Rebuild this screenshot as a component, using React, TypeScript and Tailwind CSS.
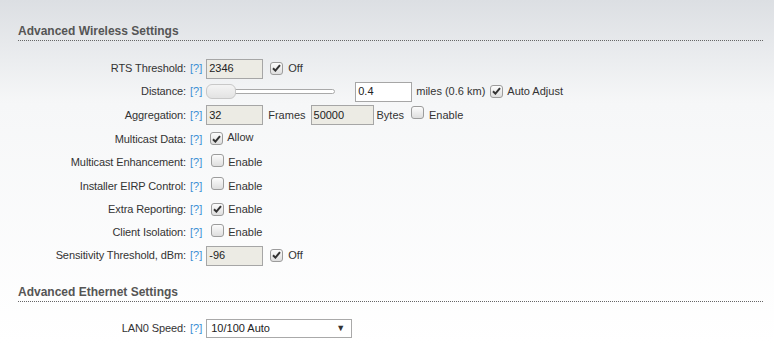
import React from "react";

const font = { fontFamily: '"Liberation Sans", Arial, sans-serif' };

function Check({ on }: { on?: boolean }) {
  return (
    <span className="inline-flex h-[13px] w-[13px] shrink-0 items-center justify-center rounded-[3px] border border-[#9c9c9c] bg-gradient-to-b from-[#fcfcfc] to-[#dedede]">
      {on && (
        <svg width="9" height="8" viewBox="0 0 9 8">
          <path d="M1 4.2 L3.4 6.6 L8 1.2" fill="none" stroke="#333" strokeWidth="2" />
        </svg>
      )}
    </span>
  );
}

function Input({ value, w = "w-[57px]", white }: { value: string; w?: string; white?: boolean }) {
  return (
    <span
      className={`inline-flex h-[20px] ${w} items-center border border-[#a6a6a6] px-[2px] text-[11px] text-[#222] ${
        white ? "bg-white" : "bg-[#ecebe4]"
      }`}
    >
      {value}
    </span>
  );
}

function Row({ label, children, h = "h-[23px]" }: { label: string; children: React.ReactNode; h?: string }) {
  return (
    <div className={`flex ${h} items-center`}>
      <div className="w-[168px] text-right text-[11px] tracking-[-0.1px] text-[#333]">{label}</div>
      <span className="ml-[4px] text-[11px] text-[#3b8fd4]">[?]</span>
      <div className="ml-[4px] flex items-center text-[11px] text-[#333]">{children}</div>
    </div>
  );
}

function Heading({ title }: { title: string }) {
  return (
    <div className="mr-[11px] border-b border-dotted border-[#666] pb-[2px]">
      <div className="text-[12px] font-bold leading-[14px] text-[#555]">{title}</div>
    </div>
  );
}

export default function App() {
  return (
    <div
      style={font}
      className="h-[344px] w-[774px] overflow-hidden bg-gradient-to-b from-[#dcdfe3] via-[#f6f7f8] via-[30%] to-white pl-[18px] pt-[24px]"
    >
      <Heading title="Advanced Wireless Settings" />
      <div className="mt-[16px]">
        <Row label="RTS Threshold:">
          <Input value="2346" />
          <span className="ml-[7px]"><Check on /></span>
          <span className="ml-[5px]">Off</span>
        </Row>
        <Row label="Distance:">
          <span className="relative flex h-[16px] w-[129px] items-center">
            <span className="absolute left-[4px] right-0 h-[5px] rounded-full border border-[#a9a9a9] bg-white" />
            <span className="absolute left-0 h-[15px] w-[30px] rounded-[6px] border border-[#c8c8c8] bg-gradient-to-b from-[#f4f4f4] to-[#e3e3e3]" />
          </span>
          <span className="ml-[20px]"><Input value="0.4" white /></span>
          <span className="ml-[4px]">miles (0.6 km)</span>
          <span className="ml-[5px]"><Check on /></span>
          <span className="ml-[4px]">Auto Adjust</span>
        </Row>
        <Row label="Aggregation:" h="h-[24px]">
          <Input value="32" />
          <span className="ml-[5px]">Frames</span>
          <span className="ml-[5px]"><Input value="50000" w="w-[63px]" /></span>
          <span className="ml-[3px]">Bytes</span>
          <span className="ml-[7px]"><Check /></span>
          <span className="ml-[5px]">Enable</span>
        </Row>
        <Row label="Multicast Data:" h="h-[24px]">
          <span className="ml-[4px]"><Check on /></span>
          <span className="ml-[4px] -mt-[4px]">Allow</span>
        </Row>
        <Row label="Multicast Enhancement:">
          <span className="ml-[5px]"><Check /></span>
          <span className="ml-[4px]">Enable</span>
        </Row>
        <Row label="Installer EIRP Control:" h="h-[24px]">
          <span className="ml-[5px]"><Check /></span>
          <span className="ml-[4px]">Enable</span>
        </Row>
        <Row label="Extra Reporting:">
          <span className="ml-[5px]"><Check on /></span>
          <span className="ml-[4px]">Enable</span>
        </Row>
        <Row label="Client Isolation:">
          <span className="ml-[5px]"><Check /></span>
          <span className="ml-[4px]">Enable</span>
        </Row>
        <Row label="Sensitivity Threshold, dBm:">
          <Input value="-96" />
          <span className="ml-[7px]"><Check on /></span>
          <span className="ml-[5px]">Off</span>
        </Row>
      </div>
      <div className="mt-[18px]">
        <Heading title="Advanced Ethernet Settings" />
      </div>
      <div className="mt-[15px]">
        <Row label="LAN0 Speed:">
          <span className="flex h-[19px] w-[146px] items-center justify-between border border-[#a9a9a9] bg-white pl-[4px] pr-[6px] text-[11px] text-[#222]">
            <span>10/100 Auto</span>
            <span className="text-[9px] text-[#333]">▼</span>
          </span>
        </Row>
      </div>
    </div>
  );
}
